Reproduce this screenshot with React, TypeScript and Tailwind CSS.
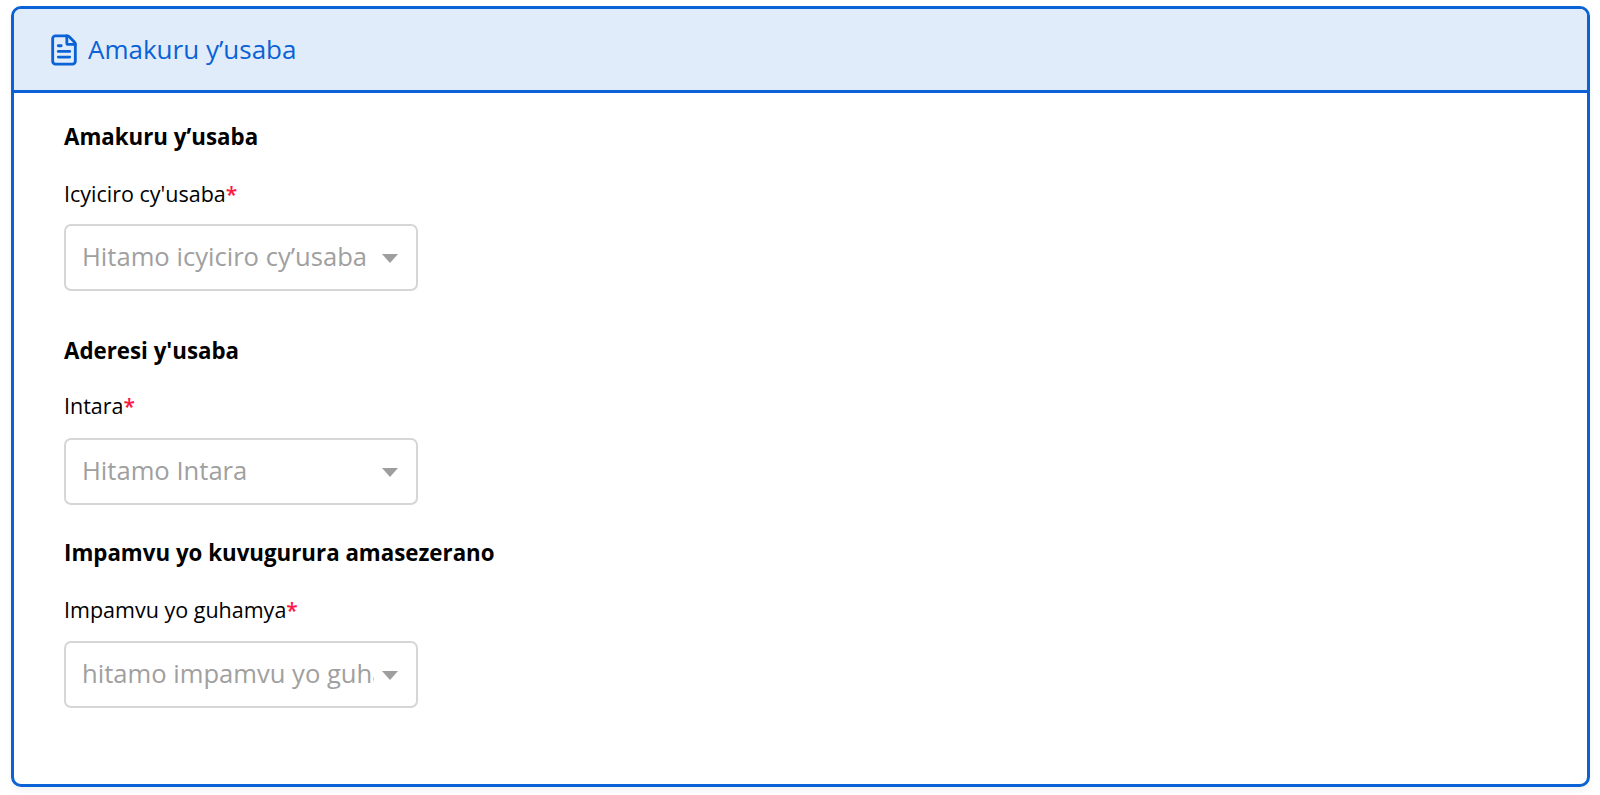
import { FileText } from "lucide-react";

const font = "font-['Open_Sans','Noto_Sans',sans-serif]";

function Field({ label, placeholder, gap }: { label: string; placeholder: string; gap: string }) {
  return (
    <div>
      <div className="h-[30px] text-[21.5px] leading-[30px] text-black whitespace-nowrap">
        {label}
        <span className="text-[#ff1744] text-[21px] font-semibold">*</span>
      </div>
      <div className={`${gap} flex h-[67px] w-[354px] items-center rounded-[7px] border-2 border-[#d6d6d6] bg-white pl-[16px] pr-[18px]`}>
        <span className="w-[292px] overflow-hidden whitespace-nowrap text-[25.6px] text-[#a0a0a0]">{placeholder}</span>
        <span className="ml-auto mt-[2px] h-0 w-0 border-x-[8px] border-t-[9px] border-x-transparent border-t-[#9e9e9e]" />
      </div>
    </div>
  );
}

function Heading({ children }: { children: string }) {
  return <h2 className="h-[30px] text-[22.3px] leading-[30px] font-bold text-black whitespace-nowrap">{children}</h2>;
}

export default function App() {
  return (
    <div className={`h-[795px] bg-white pt-[6px] pl-[11px] pr-[10px] ${font}`}>
      <div className="h-[781px] overflow-hidden rounded-[10px] border-[3px] border-[#0a62d6] bg-white shadow-[0_4px_6px_rgba(0,0,0,0.05)]">
        <header className="flex h-[84px] items-center gap-[7px] border-b-[3px] border-[#0a62d6] bg-[#e0ecf9] pl-[33px] text-[#0a62d6]">
          <FileText size={34} strokeWidth={2} />
          <span className="text-[26px]">Amakuru y’usaba</span>
        </header>
        <main className="pl-[50px] pt-[29px]">
          <Heading>Amakuru y’usaba</Heading>
          <div className="mt-[27px]">
            <Field label="Icyiciro cy'usaba" placeholder="Hitamo icyiciro cy’usaba" gap="mt-[15px]" />
          </div>
          <div className="mt-[45px]">
            <Heading>Aderesi y'usaba</Heading>
          </div>
          <div className="mt-[25px]">
            <Field label="Intara" placeholder="Hitamo Intara" gap="mt-[17px]" />
          </div>
          <div className="mt-[33px]">
            <Heading>Impamvu yo kuvugurura amasezerano</Heading>
          </div>
          <div className="mt-[27px]">
            <Field label="Impamvu yo guhamya" placeholder="hitamo impamvu yo guhamya" gap="mt-[16px]" />
          </div>
        </main>
      </div>
    </div>
  );
}
